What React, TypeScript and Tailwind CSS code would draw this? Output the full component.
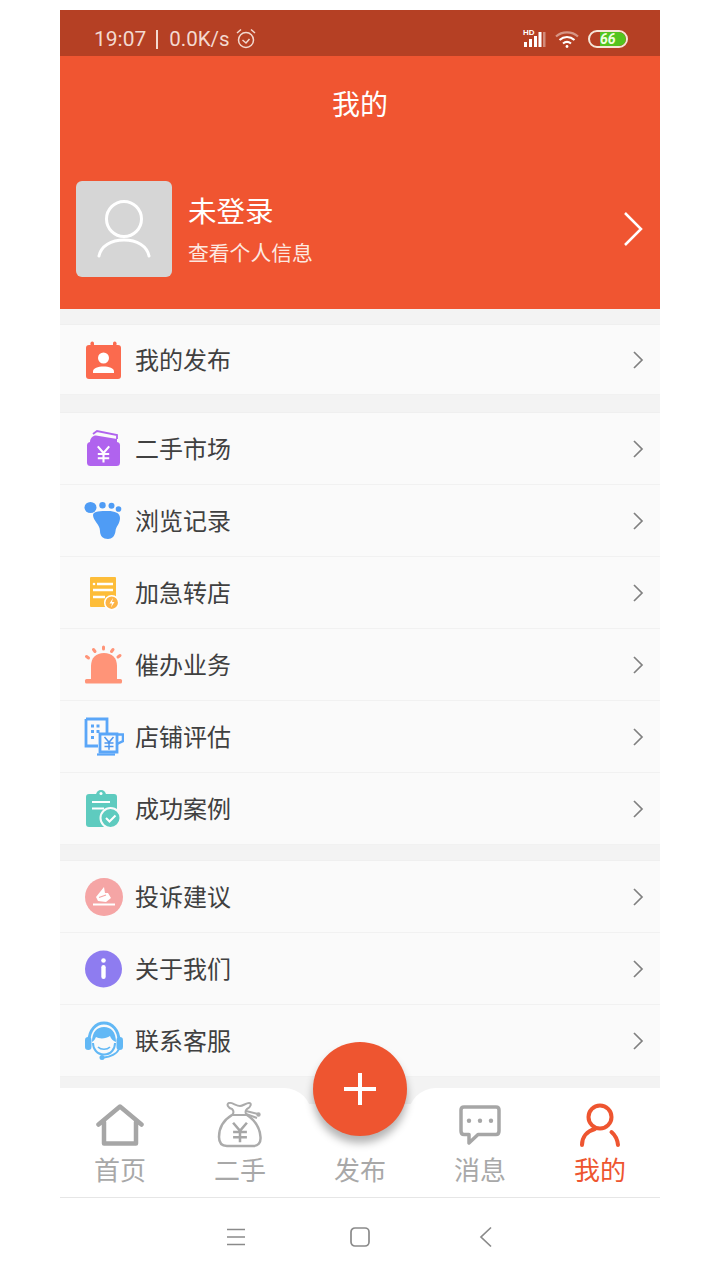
import React from 'react';

const Chevron = () => (
  <svg width="12" height="20" viewBox="0 0 12 20" fill="none" className="shrink-0">
    <path d="M2 2l8 8-8 8" stroke="#808080" strokeWidth="1.7" />
  </svg>
);

const Yen = ({ x, y, s = 1, color = '#fff', w = 1.8 }: { x: number; y: number; s?: number; color?: string; w?: number }) => (
  <g transform={`translate(${x} ${y}) scale(${s})`} stroke={color} strokeWidth={w} fill="none">
    <path d="M-6-8L0-1 6-8M0-1V9M-6 0H6M-6 4.500H6" />
  </g>
);

const IconPublish = () => (
  <svg width="40" height="40" viewBox="0 0 40 40">
    <rect x="2" y="5" width="35" height="34" rx="3" fill="#fb6a4e" />
    <rect x="6.500" y="1.500" width="3.500" height="7" rx="1.700" fill="#fb6a4e" />
    <rect x="29" y="1.500" width="3.500" height="7" rx="1.700" fill="#fb6a4e" />
    <circle cx="19.500" cy="18" r="5.500" fill="#fff" />
    <path d="M9 33v-1.500C9 28 14 26.500 19.500 26.500S30 28 30 31.500V33z" fill="#fff" />
  </svg>
);

const IconWallet = () => (
  <svg width="40" height="40" viewBox="0 0 40 40">
    <path d="M9 5L13 2 33 6V10" fill="none" stroke="#b063ee" strokeWidth="1.800" />
    <path d="M6 13C6 9 9 6.500 12 6.500L33 10V13z" fill="#b063ee" />
    <rect x="3" y="13" width="33" height="24" rx="3.500" fill="#b063ee" />
    <Yen x={19.500} y={25} s={0.95} w={2.200} />
  </svg>
);

const IconFoot = () => (
  <svg width="40" height="40" viewBox="0 0 40 40" fill="#4f9cf5">
    <ellipse cx="6.500" cy="6.500" rx="6" ry="5.500" />
    <circle cx="18.500" cy="4.300" r="3.200" />
    <circle cx="27.500" cy="4.800" r="3" />
    <circle cx="34.500" cy="8" r="2.800" />
    <path d="M9 14C9 10 17 10 24 10C31 10 36 12 36 17C36 23 32 25 31.500 30C31 35 28 38 24 38C19 38 16 35 16 30C16 23 9 20 9 14z" />
  </svg>
);

const IconDoc = () => (
  <svg width="40" height="40" viewBox="0 0 40 40">
    <rect x="6" y="4" width="26" height="30" rx="1" fill="#fdbd39" />
    <path d="M13 11H29M9 17H29M9 24H21" stroke="#fff" strokeWidth="2.400" />
    <circle cx="10" cy="11" r="1.300" fill="#fff" />
    <circle cx="27.700" cy="29.700" r="7" fill="#fdb446" stroke="#fff" strokeWidth="1.500" />
    <path d="M29 25l-3.500 5.500H28l-1 4 3.500-5.500H28z" fill="#fff" />
  </svg>
);

const IconAlarm = () => (
  <svg width="40" height="40" viewBox="0 0 40 40" fill="#ff9478">
    <path d="M7 34V21C7 13 12 8 20 8S33 13 33 21V34z" />
    <rect x="1" y="34" width="37" height="4.500" rx="1.500" />
    <g stroke="#ff9478" strokeWidth="3" strokeLinecap="round">
      <path d="M19.500 2V4M9.500 4.500L11 6.500M29 4.500L27.500 6.500M2.500 11.500L4.500 13M36 10.500L34 12" />
    </g>
  </svg>
);

const IconBuilding = () => (
  <svg width="40" height="40" viewBox="0 0 40 40" fill="none" stroke="#5aa6f8">
    <path d="M2 2H23V16M14 29H2V2" strokeWidth="2.800" />
    <path d="M16 17H33V35H16z" strokeWidth="2.800" fill="#fafafa" />
    <path d="M33 17.500H39V24L33 27" strokeWidth="2.500" />
    <path d="M13 37.500H31" strokeWidth="2.200" />
    <path d="M7 9H10M12.500 9H15.500M7 14.500H10M12.500 14.500H15.500M7 20.500H10" strokeWidth="3" />
    <Yen x={25} y={26} s={0.75} color="#4d96ee" w={2} />
  </svg>
);

const IconClipboard = () => (
  <svg width="40" height="40" viewBox="0 0 40 40">
    <rect x="2" y="5" width="31" height="33" rx="3" fill="#5ecbbf" />
    <path d="M12 6a5 5 0 0 1 10 0z" fill="#5ecbbf" />
    <circle cx="17" cy="4.500" r="1.500" fill="#fff" />
    <path d="M8 13H26M8 19.500H20" stroke="#fff" strokeWidth="2" />
    <circle cx="26.500" cy="29" r="10" fill="#5ecbbf" stroke="#fafafa" strokeWidth="2" />
    <path d="M22 29l3.500 3.500 6-6" fill="none" stroke="#fff" strokeWidth="2" />
  </svg>
);

const IconComplain = () => (
  <svg width="40" height="40" viewBox="0 0 40 40">
    <circle cx="20" cy="20" r="19" fill="#f5a5a5" />
    <path d="M20 10L12 20L14 24L22 25L27 21L24 16L21 16z" fill="#fff" />
    <path d="M15 20.500L22 18" stroke="#f5a5a5" strokeWidth="1.300" />
    <path d="M9 27.500H31" stroke="#fff" strokeWidth="2" />
  </svg>
);

const IconInfo = () => (
  <svg width="40" height="40" viewBox="0 0 40 40">
    <circle cx="19.500" cy="20" r="18.500" fill="#8e7cf0" />
    <circle cx="19.500" cy="11.500" r="2.300" fill="#fff" />
    <rect x="17.300" y="16" width="4.400" height="14" rx="2.200" fill="#fff" />
  </svg>
);

const IconService = () => (
  <svg width="40" height="40" viewBox="0 0 40 40" fill="none" stroke="#62b8f5">
    <path d="M5 20C5 9 12 2 20 2S35 9 35 20" strokeWidth="3" />
    <path d="M8 21C8 11 13 6 20 6S32 11 32 21C29 20 27 18 26 15C22 18 15 18 12 16C11 18 10 20 8 21z" fill="#62b8f5" stroke="none" />
    <rect x="1" y="16" width="6.500" height="13" rx="3.200" fill="#62b8f5" stroke="none" />
    <rect x="32.500" y="16" width="6.500" height="13" rx="3.200" fill="#62b8f5" stroke="none" />
    <path d="M9 22C9 28 13 33.500 20 33.500S31 28 31 22" strokeWidth="2" />
    <path d="M14 26C17 29 23 29 26 26" strokeWidth="1.700" />
    <path d="M35 28C33 33 26 36 20 36.500" strokeWidth="2" />
    <circle cx="18" cy="36.500" r="2.500" fill="#62b8f5" stroke="none" />
  </svg>
);

const IconHome = () => (
  <svg width="48" height="48" viewBox="0 0 48 48" fill="none" stroke="#a6a6a6" strokeWidth="4.500" strokeLinejoin="round" strokeLinecap="round">
    <path d="M2.500 22.500L24 4.500 45.500 22.500M8 20V41.500H40V20" />
  </svg>
);

const IconBag = () => (
  <svg width="48" height="48" viewBox="0 0 48 48" fill="none" stroke="#ababab" strokeWidth="2">
    <path d="M16 13C6 19 3 28 3 35C3 41 6 44 11 44H37C42 44 45 41 44.500 35C44 27 40 19 31 13" strokeWidth="2.500" />
    <path d="M16 13H31C29 11 29 9 31 7C35 5 36 1 33 1C30 1 27 4 24 4C20 4 16 0 13 1C10 2 12 6 16 7C18 9 18 11 16 13z" />
    <path d="M30 9L42 12M30 12L41 16" />
    <circle cx="42.500" cy="12.500" r="1.200" fill="#ababab" />
    <Yen x={24} y={30} s={1.150} color="#a6a6a6" w={2.200} />
  </svg>
);

const IconBubble = () => (
  <svg width="48" height="48" viewBox="0 0 48 48" fill="none">
    <path d="M8 5H40C42 5 43 6 43 8V29C43 31 42 32.500 40 32.500H22L13 41V32.500H8C6 32.500 5 31 5 29V8C5 6 6 5 8 5z" stroke="#a6a6a6" strokeWidth="3.500" strokeLinejoin="round" />
    <circle cx="13" cy="18.700" r="2.200" fill="#a6a6a6" />
    <circle cx="24" cy="18.700" r="2.200" fill="#a6a6a6" />
    <circle cx="35" cy="18.700" r="2.200" fill="#a6a6a6" />
  </svg>
);

const IconUser = () => (
  <svg width="48" height="48" viewBox="0 0 48 48" fill="none" stroke="#ee5530" strokeWidth="4" strokeLinecap="round">
    <circle cx="24" cy="15" r="11.500" />
    <path d="M6 43C6 35 11 29 19 27M35.500 30C39 33 41.500 38 42 43" />
  </svg>
);

const menuGroups = [
  [{ label: '我的发布', icon: <IconPublish />, h: 'h-[70px]' }],
  [
    { label: '二手市场', icon: <IconWallet />, h: 'h-[72px]' },
    { label: '浏览记录', icon: <IconFoot />, h: 'h-[72px]' },
    { label: '加急转店', icon: <IconDoc />, h: 'h-[72px]' },
    { label: '催办业务', icon: <IconAlarm />, h: 'h-[72px]' },
    { label: '店铺评估', icon: <IconBuilding />, h: 'h-[72px]' },
    { label: '成功案例', icon: <IconClipboard />, h: 'h-[72px]' },
  ],
  [
    { label: '投诉建议', icon: <IconComplain />, h: 'h-[72px]' },
    { label: '关于我们', icon: <IconInfo />, h: 'h-[72px]' },
    { label: '联系客服', icon: <IconService />, h: 'h-[72px]' },
  ],
];

const tabs = [
  { label: '首页', icon: <IconHome /> },
  { label: '二手', icon: <IconBag /> },
  { label: '发布', icon: <div className="h-12 w-12" /> },
  { label: '消息', icon: <IconBubble /> },
  { label: '我的', icon: <IconUser />, active: true },
];

export default function App() {
  return (
    <div className="min-h-[1280px] bg-white pt-[10px] font-['Noto_Sans_CJK_SC','Noto_Sans',sans-serif]">
      <div className="relative mx-auto w-[600px] bg-[#f3f3f3]">
        {/* status bar */}
        <div className="flex h-[46px] items-center justify-between bg-[#b54024] pl-[34px] pr-[32px] pt-[15px] pb-[3px] text-[#f3d9d0]">
          <div className="flex items-center font-['Roboto',sans-serif] text-[21px] leading-none">
            <span>19:07</span>
            <span className="ml-[10px] mr-[11px] h-[19px] w-[2px] bg-[#f3d9d0]" />
            <span className="text-[20.500px]">0.0K/s</span>
            <svg width="20" height="22" viewBox="0 0 20 22" fill="none" stroke="#f3d9d0" strokeWidth="1.500" className="ml-[6px]">
              <circle cx="10" cy="12" r="7.500" />
              <path d="M6.500 12L10 15 13.500 11M1 5L5 1.500M19 5L15 1.500" />
            </svg>
          </div>
          <div className="flex items-center">
            <div className="relative h-[20px] w-[25px]">
              <span className="absolute -top-[1px] left-[3px] font-['Liberation_Sans',sans-serif] text-[8px] font-bold leading-[10px] text-white">HD</span>
              <svg width="26" height="20" viewBox="0 0 26 20" fill="#fff" className="absolute left-0 top-0">
                <path d="M4 13h3v5H4zM9 10h3v8H9zM14 7h3v11h-3zM18.500 3h3v15h-3z" />
                <path d="M23 3h2.500v15H23z" opacity="0.400" />
              </svg>
            </div>
            <svg width="24" height="18" viewBox="0 0 24 18" fill="none" stroke="#fff" strokeWidth="2.200" className="ml-[10px]">
              <path d="M1 6.500C7 1 17 1 23 6.500" opacity="0.450" />
              <path d="M4.500 10C9 6 15 6 19.500 10" />
              <path d="M8 13.500C10.500 11.500 13.500 11.500 16 13.500" />
              <circle cx="12" cy="16.500" r="1.400" fill="#fff" stroke="none" />
            </svg>
            <div className="relative ml-[9px] flex h-[18px] w-[40px] items-center overflow-hidden rounded-full border-2 border-[#f6e6d8]">
              <div className="absolute inset-y-0 left-[10px] right-0 rounded-r-full bg-[#53c41e]" />
              <span className="relative ml-[10px] font-['Roboto',sans-serif] text-[14px] font-bold italic leading-none text-[#f0ffe0]">66</span>
            </div>
          </div>
        </div>

        {/* header */}
        <div className="flex h-[253px] flex-col bg-[#f05531] text-white">
          <h1 className="pt-[27px] text-center text-[28px] font-normal leading-[40px]">我的</h1>
          <div className="mt-[58px] flex items-center pl-[16px] pr-[16px]">
            <div className="flex h-[96px] w-[96px] shrink-0 items-center justify-center rounded-[6px] bg-[#d6d6d6]">
              <svg width="56" height="62" viewBox="0 0 56 62" fill="none" stroke="#fff" strokeWidth="3" strokeLinecap="round">
                <circle cx="28" cy="21" r="17.500" />
                <path d="M3 58C5 48 15 42 28 42S51 48 53 58" />
              </svg>
            </div>
            <div className="ml-[16px] flex-1 pb-[2px]">
              <div className="text-[28.500px] leading-[40px]">未登录</div>
              <div className="mt-[7px] text-[20.800px] leading-[30px] text-[#fde8e0]">查看个人信息</div>
            </div>
            <svg width="20" height="36" viewBox="0 0 20 36" fill="none" stroke="#fff" strokeWidth="2.500" className="mr-[1px]">
              <path d="M2 2l16 16L2 34" />
            </svg>
          </div>
        </div>

        {/* menu */}
        <div className="flex flex-col pt-[16px]">
          {menuGroups.map((group, i) => (
            <div key={i} className={`bg-[#fafafa] shadow-[0_-1px_0_#efefef] ${i === 1 ? 'mt-[18px]' : i === 2 ? 'mt-[16px]' : ''}`}>
              {group.map((item) => (
                <div key={item.label} className={`flex ${item.h} items-center border-b border-[#f1f1f1] pl-[24px] pr-[16px]`}>
                  <div className="h-10 w-10 shrink-0">{item.icon}</div>
                  <span className="ml-[11px] flex-1 pb-[2px] text-[24px] leading-none text-[#404040]">{item.label}</span>
                  <Chevron />
                </div>
              ))}
            </div>
          ))}
        </div>

        {/* tab bar */}
        <div className="relative mt-[11px] h-[110px] border-b border-[#e6e6e6] bg-[#f3f3f3]">
          <div className="absolute inset-y-0 left-0 w-[252px] rounded-tr-[28px] bg-white" />
          <div className="absolute inset-y-0 right-0 w-[252px] rounded-tl-[28px] bg-white" />
          <div className="absolute inset-x-0 bottom-0 top-[16px] bg-white" />
          <div className="relative grid grid-cols-5">
            {tabs.map((tab) => (
              <div key={tab.label} className="flex flex-col items-center pt-[14px]">
                {tab.icon}
                <span className={`text-[26px] leading-[38px] ${tab.active ? 'text-[#ee5530]' : 'text-[#a8a8a8]'}`}>{tab.label}</span>
              </div>
            ))}
          </div>
          <button className="absolute left-[253px] top-[-46px] flex h-[94px] w-[94px] items-center justify-center rounded-full bg-[#ee5530] shadow-[0_7px_9px_rgba(0,0,0,0.3)]" aria-label="发布">
            <svg width="32" height="32" viewBox="0 0 32 32" stroke="#fff" strokeWidth="4">
              <path d="M16 0V32M0 16H32" />
            </svg>
          </button>
        </div>

        {/* system nav */}
        <div className="flex h-[72px] items-center bg-white pl-[166px] pt-[6px]">
          <svg width="20" height="18" viewBox="0 0 20 18" stroke="#8a8a8a" strokeWidth="1.700">
            <path d="M1 1.500H19M1 9H19M1 16.500H19" />
          </svg>
          <svg width="20" height="20" viewBox="0 0 20 20" fill="none" stroke="#8a8a8a" strokeWidth="1.700" className="ml-[104px]">
            <rect x="1" y="1" width="18" height="18" rx="4" />
          </svg>
          <svg width="14" height="22" viewBox="0 0 14 22" fill="none" stroke="#8a8a8a" strokeWidth="1.700" className="ml-[109px]">
            <path d="M12 1.500L2 11l10 9.500" />
          </svg>
        </div>
      </div>
    </div>
  );
}
